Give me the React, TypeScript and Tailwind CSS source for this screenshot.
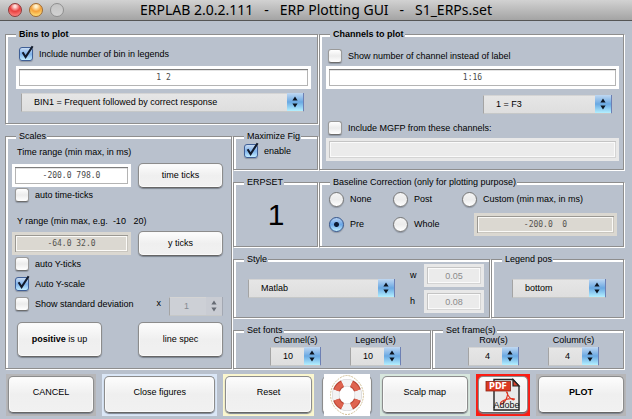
import type { ReactNode } from "react";

const LABEL = "text-[9px] leading-[10px]";

type PanelProps = { title: string; bold?: boolean; className?: string; children: ReactNode };

function Panel({ title, bold, className = "", children }: PanelProps) {
  return (
    <fieldset
      className={`min-w-0 border border-t-[#8e8e8e] border-l-[#8e8e8e] border-r-white border-b-white shadow-[inset_-1px_-1px_0_#8e8e8e,inset_2px_2px_0_#ffffff] ${className}`}
    >
      <legend
        className={`relative ml-2.5 bg-[#b9c1cd] pr-px pl-[3px] whitespace-nowrap ${LABEL} ${bold ? "font-bold" : ""}`}
      >
        {title}
      </legend>
      {children}
    </fieldset>
  );
}

function Check({ label, checked }: { label: string; checked?: boolean }) {
  return (
    <label className={`flex h-3.5 items-center gap-1.5 whitespace-nowrap ${LABEL}`}>
      <span className="relative block size-3.5 shrink-0">
        <input
          type="checkbox"
          defaultChecked={checked}
          className="peer block size-3.5 appearance-none rounded-[3px] border border-[#9a9a9a] border-b-[#6d6d6d] bg-linear-to-b from-[#ffffff] via-[#ececec] to-[#ffffff] shadow-[0_1px_1px_#8d95a1] checked:border-[#3f5f96] checked:from-[#c9dcf3] checked:via-[#7fb2ea] checked:to-[#c2ecff]"
        />
        <svg
          viewBox="0 0 16 16"
          className="pointer-events-none absolute -top-0.5 left-0 hidden size-4 peer-checked:block"
        >
          <path d="M3.6 7.2 L6.6 12 L13.6 1.2" fill="none" stroke="#111a2b" strokeWidth="2.1" />
        </svg>
      </span>
      <span className="pb-px">{label}</span>
    </label>
  );
}

function Radio({ label, checked }: { label: string; checked?: boolean }) {
  return (
    <label className={`flex h-4 items-center gap-1.5 whitespace-nowrap ${LABEL}`}>
      <input
        type="radio"
        name="baseline"
        defaultChecked={checked}
        className="block size-[15px] shrink-0 appearance-none rounded-full border border-[#777777] bg-linear-to-b from-[#f4f4f4] via-[#ececec] to-[#ffffff] shadow-[0_1px_1px_#8d95a1] checked:border-[#34558c] checked:bg-[radial-gradient(circle_at_center,#0c1a33_2px,transparent_3px),linear-gradient(#b5d0f0,#6aa6e6_50%,#c0eeff)]"
      />
      <span className="pb-px">{label}</span>
    </label>
  );
}

type FieldProps = { name: string; value: string; tone?: "white" | "tan" | "dim"; className?: string; sans?: boolean };

const TONES = {
  white:
    "border-white bg-white text-[#4a4a4a] shadow-[inset_0_1px_0_#7d7d7d,inset_0_0_0_1px_#b4b4b4,inset_0_2px_0_#e4e4e4]",
  tan: "border-[#dbd8d1] bg-[#dbd8d1] text-[#55534f] shadow-[inset_1px_1px_0_#9a9893,inset_0_0_0_1px_#c9c6bf,inset_0_0_0_2px_#fbfaf7]",
  dim: "border-[#e8e8e8] bg-[#ebebeb] text-[#8b8b8b] shadow-[inset_1px_1px_0_#c4c4c4,inset_0_0_0_1px_#d4d4d4,inset_0_0_0_2px_#fafafa]",
};

function Field({ name, value, tone = "white", className = "w-full", sans }: FieldProps) {
  return (
    <input
      type="text"
      aria-label={name}
      defaultValue={value}
      disabled={tone === "dim"}
      className={`block h-[23px] min-w-0 border-[3px] text-center ${TONES[tone]} ${
        sans ? "text-[9px]" : "font-['DejaVu_Sans_Mono',monospace] text-[8px]"
      } ${className}`}
    />
  );
}

type PickProps = { name: string; value: string; className?: string; pad?: string; disabled?: boolean };

function Pick({ name, value, className = "", pad = "pl-3", disabled }: PickProps) {
  return (
    <div className={`relative h-[19px] ${className}`}>
      <select
        aria-label={name}
        disabled={disabled}
        className={`block h-full w-full appearance-none border border-t-[#d4d4d4] border-r-[#8896b8] border-b-[#c6c8c8] border-l-[#a4a4a4] pb-0.5 ${LABEL} ${pad} ${
          disabled ? "bg-[#cdd0d6] text-[#858a92]" : "bg-linear-to-b from-[#e6e6e6] to-[#dedede] text-black"
        }`}
      >
        <option>{value}</option>
      </select>
      <span
        className={`pointer-events-none absolute top-0 right-0 flex h-[18px] w-[17px] items-center justify-center border-r ${
          disabled
            ? "border-[#a3a8b2] bg-[#c9ccd3] text-[#666b74]"
            : "border-[#6d80b4] bg-linear-to-b from-[#c0d8f2] via-[#69a8e2] to-[#b4f0ff] text-[#0b1420]"
        }`}
      >
        <svg viewBox="0 0 6 12" className="h-3 w-1.5" fill="currentColor">
          <path d="M3 0.5 L5.6 4.5 H0.4 Z M3 11.5 L5.6 7.5 H0.4 Z" />
        </svg>
      </span>
    </div>
  );
}

const FACE =
  "rounded-[5px] border border-[#8c8c8c] border-b-[#666666] bg-linear-to-b from-[#fdfdfd] via-[#efefef] to-[#f1f1f1] shadow-[0_1px_1px_#7c838e,inset_0_0_0_1px_#fafafa]";

function Push({ className, children }: { className: string; children: ReactNode }) {
  return (
    <button type="button" className={`w-[85px] shrink-0 pb-0.5 ${FACE} ${LABEL} ${className}`}>
      {children}
    </button>
  );
}

function Action({ frame, className = "pb-[5px]", children }: { frame: string; className?: string; children: ReactNode }) {
  return (
    <div className={`h-[42px] min-w-0 p-0.5 pb-[3px] ${frame}`}>
      <button type="button" className={`h-full w-full ${FACE} ${LABEL} ${className}`}>
        {children}
      </button>
    </div>
  );
}

function LifeRing() {
  return (
    <svg viewBox="0 0 46 42" className="h-[42px] w-[46px]" aria-hidden="true">
      <path
        d="M16 4 Q23 -1 30 4 Q39 10 39.5 21 Q39 32 30 38 Q23 43 16 38 Q7 32 6.5 21 Q7 10 16 4 Z"
        fill="none"
        stroke="#d2c096"
        strokeWidth="1"
        strokeDasharray="2 1"
      />
      <ellipse cx="23" cy="21" rx="11.3" ry="12.3" fill="none" stroke="#d2d2d4" strokeWidth="7.4" />
      <ellipse cx="23" cy="21" rx="11.3" ry="12.3" fill="none" stroke="#f3f3f4" strokeWidth="6.2" />
      <ellipse
        cx="23"
        cy="21"
        rx="11.3"
        ry="12.3"
        fill="none"
        stroke="#b94332"
        strokeWidth="7"
        pathLength="360"
        strokeDasharray="44 46"
        strokeDashoffset="-23"
      />
      <ellipse
        cx="23"
        cy="21"
        rx="11.3"
        ry="12.3"
        fill="none"
        stroke="#df6450"
        strokeWidth="5"
        pathLength="360"
        strokeDasharray="44 46"
        strokeDashoffset="-23"
      />
    </svg>
  );
}

function PdfIcon() {
  return (
    <svg viewBox="0 0 36 34" className="h-[34px] w-9 shrink-0" aria-hidden="true">
      <path d="M9 1.5 H28 L34 8 V32 H9 Z" fill="#e9e9e9" stroke="#222222" strokeWidth="1.4" />
      <path d="M28 1.5 V8 H34 Z" fill="#d9412b" stroke="#222222" strokeWidth="1.2" />
      <path
        d="M21.5 14 C23.5 14 22.5 19 20.5 22.5 C18.5 26 15 27.5 15.5 25 C17 22 27 19.5 29.5 21 C29 23.5 24 20.5 21.5 14 Z"
        fill="none"
        stroke="#e0331f"
        strokeWidth="1.1"
      />
      <rect x="1" y="3.5" width="24.5" height="9.5" fill="#dc3a22" stroke="#8d2516" strokeWidth="0.8" />
      <text x="13" y="11" textAnchor="middle" fontSize="8" fontWeight="bold" fill="#ffffff" fontFamily="DejaVu Sans">
        PDF
      </text>
      <text x="21.5" y="30" textAnchor="middle" fontSize="9" fill="#111111" fontFamily="Liberation Sans">
        Adobe
      </text>
    </svg>
  );
}

function Stepper({ label, value, pad }: { label: string; value: string; pad?: string }) {
  return (
    <div className="w-[51px]">
      <div className={`text-center whitespace-nowrap ${LABEL}`}>{label}</div>
      <Pick name={label} value={value} pad={pad} className="mt-0.5" />
    </div>
  );
}

export default function App() {
  return (
    <div className="min-h-screen bg-[#b9c1cd] font-['Liberation_Sans',Arial,sans-serif] text-black">
      <header className="relative flex h-[21px] items-center justify-center border-b border-[#555555] bg-linear-to-b from-[#d2d2d2] to-[#a4a4a4]">
        <div className="absolute top-[3px] left-2 flex gap-[7px]">
          <span className="size-3.5 rounded-full border border-[#8f3a3a] bg-[radial-gradient(circle_at_50%_20%,#ffdcd8_1px,#e8403f_5px,#ff8a86_10px)]" />
          <span className="size-3.5 rounded-full border border-[#a06a30] bg-[radial-gradient(circle_at_50%_20%,#fff3cf_1px,#f5a23a_5px,#ffe680_10px)]" />
          <span className="size-3.5 rounded-full border border-[#8f8f8f] bg-linear-to-b from-[#c4c4c4] to-[#d2d2d2]" />
        </div>
        <h1 className="font-['Noto_Sans',sans-serif] text-[14px] leading-4 whitespace-pre">
          {"ERPLAB 2.0.2.111   -   ERP Plotting GUI   -   S1_ERPs.set"}
        </h1>
      </header>

      <main className="grid grid-cols-[228fr_86fr_306fr] gap-y-1.5 pt-2 pr-[7px] pl-[5px]">
        <Panel title="Bins to plot" bold className="col-span-2">
          <div className="pt-2 pr-[7px] pb-3 pl-2.5">
            <div className="pl-[3px]">
              <Check label="Include number of bin in legends" checked />
            </div>
            <div className="pt-[5px]">
              <Field name="Bins" value="1 2" />
            </div>
            <Pick
              name="Bin list"
              value="BIN1 = Frequent followed by correct response"
              className="mt-1 mr-[7px] ml-[5px]"
            />
          </div>
        </Panel>

        <Panel title="Channels to plot" bold className="row-span-2">
          <div className="pt-2.5 pr-[5px] pb-2 pl-1.5">
            <div className="pl-0.5">
              <Check label="Show number of channel instead of label" />
            </div>
            <div className="pt-[3px]">
              <Field name="Channels" value="1:16" />
            </div>
            <div className="flex justify-end pt-1.5 pr-[7px]">
              <Pick name="Channel list" value="1 = F3" className="w-[129px]" />
            </div>
            <div className="pt-[7px] pl-0.5">
              <Check label="Include MGFP from these channels:" />
            </div>
            <div className="pt-[3px]">
              <Field name="MGFP channels" value="" tone="dim" />
            </div>
          </div>
        </Panel>

        <Panel title="Scales" className="row-span-4">
          <div className="pt-1.5 pr-[9px] pb-3 pl-1.5">
            <div className={`pl-[5px] ${LABEL}`}>Time range (min max, in ms)</div>
            <div className="flex items-center gap-[7px] pt-1.5">
              <Field name="Time range" value="-200.0 798.0" className="flex-1" />
              <Push className="h-[25px]">time ticks</Push>
            </div>
            <div className="pl-[3px]">
              <Check label="auto time-ticks" />
            </div>
            <div className={`pt-3.5 pl-[5px] whitespace-pre ${LABEL}`}>{"Y range (min max, e.g.  -10   20)"}</div>
            <div className="flex items-center gap-[7px] pt-[5px]">
              <Field name="Y range" value="-64.0 32.0" tone="tan" className="flex-1" />
              <Push className="h-[25px]">y ticks</Push>
            </div>
            <div className="flex flex-col gap-1.5 pt-px pl-[3px]">
              <Check label="auto Y-ticks" />
              <Check label="Auto Y-scale" checked />
              <div className="flex items-start">
                <Check label="Show standard deviation" />
                <span className={`ml-auto pt-px pr-2 ${LABEL}`}>x</span>
                <Pick name="Deviation multiplier" value="1" pad="pl-3.5" className="w-[54px]" disabled />
              </div>
            </div>
            <div className="flex justify-between pt-1.5 pl-[5px]">
              <Push className="h-[35px]">
                <b>positive</b> is up
              </Push>
              <Push className="h-[35px]">line spec</Push>
            </div>
          </div>
        </Panel>

        <Panel title="Maximize Fig">
          <div className="pt-[3px] pb-3 pl-2.5">
            <Check label="enable" checked />
          </div>
        </Panel>

        <Panel title="ERPSET">
          <div className="pt-[13px] text-center text-[30px] leading-[30px]">1</div>
        </Panel>

        <Panel title="Baseline Correction (only for plotting purpose)">
          <div className="grid grid-cols-[64px_69px_1fr] items-center gap-y-1.5 pt-1 pr-[7px] pb-[11px] pl-[9px]">
            <Radio label="None" />
            <Radio label="Post" />
            <Radio label="Custom (min max, in ms)" />
            <Radio label="Pre" checked />
            <Radio label="Whole" />
            <div className="pl-3">
              <Field name="Custom baseline" value="-200.0  0" tone="tan" />
            </div>
          </div>
        </Panel>

        <div className="col-span-2 grid grid-cols-[258fr_134fr]">
          <Panel title="Style">
            <div className="flex items-center justify-between pr-1.5 pb-[5px] pl-3.5">
              <Pick name="Style" value="Matlab" className="w-[147px]" />
              <div className="flex flex-col gap-[3px]">
                <label className={`flex items-center ${LABEL}`}>
                  <span className="w-3.5 pb-0.5">w</span>
                  <Field name="w" value="0.05" tone="dim" className="w-[60px]" sans />
                </label>
                <label className={`flex items-center ${LABEL}`}>
                  <span className="w-3.5 pb-0.5">h</span>
                  <Field name="h" value="0.08" tone="dim" className="w-[60px]" sans />
                </label>
              </div>
            </div>
          </Panel>
          <Panel title="Legend pos">
            <div className="pt-[15px] pr-[18px] pl-5">
              <Pick name="Legend pos" value="bottom" />
            </div>
          </Panel>
        </div>

        <div className="col-span-2 grid grid-cols-[199fr_193fr]">
          <Panel title="Set fonts">
            <div className="flex gap-[29px] pb-[3px] pl-9">
              <Stepper label="Channel(s)" value="10" />
              <Stepper label="Legend(s)" value="10" />
            </div>
          </Panel>
          <Panel title="Set frame(s)">
            <div className="flex gap-[29px] pb-[3px] pl-[35px]">
              <Stepper label="Row(s)" value="4" pad="pl-4" />
              <Stepper label="Column(s)" value="4" pad="pl-4" />
            </div>
          </Panel>
        </div>
      </main>

      <footer className="grid grid-cols-[90fr_115fr_90fr_54fr_90fr_54fr_90fr] gap-1.5 px-1.5 pt-1 pb-0.5">
        <Action frame="bg-[#b6b6b8]">CANCEL</Action>
        <Action frame="bg-[#dbe7f7]">Close figures</Action>
        <Action frame="bg-[#fbf7cf]">Reset</Action>
        <button
          type="button"
          aria-label="Help"
          className={`mx-0.5 flex h-[38px] items-center justify-center self-center ${FACE}`}
        >
          <span className="shrink-0 bg-white">
            <LifeRing />
          </span>
        </button>
        <Action frame="bg-[#d7e6dd]">Scalp map</Action>
        <Action frame="bg-[#fb1c14]" className="flex items-center justify-center">
          <PdfIcon />
        </Action>
        <Action frame="bg-[#b6b6b8]" className="pb-[5px] font-bold">
          PLOT
        </Action>
      </footer>
    </div>
  );
}
